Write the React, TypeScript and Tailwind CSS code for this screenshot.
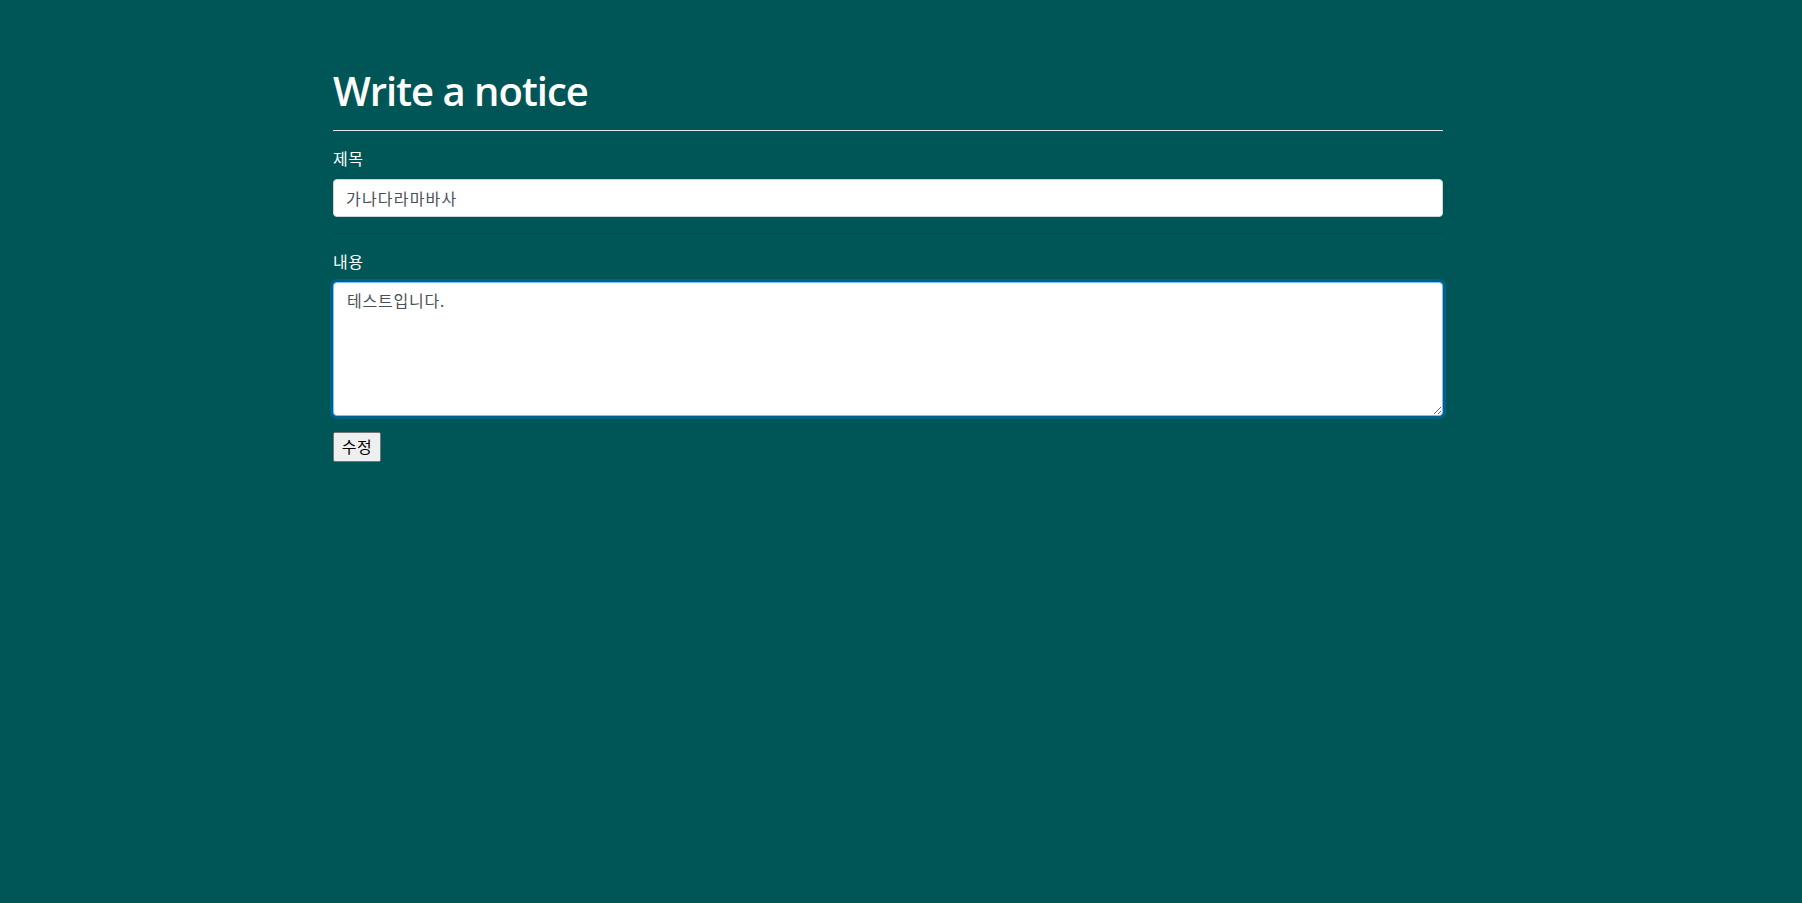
import React from "react";

export default function App() {
  const kr = { fontFamily: '"Noto Sans", "Noto Sans CJK KR", sans-serif' };
  return (
    <div className="min-h-[903px] w-full bg-[#005656]" style={kr}>
      <div className="ml-[333px] w-[1110px] pt-[67px]">
        <h1 className="m-0 text-[40px] font-semibold leading-[48px] text-white" style={{ fontFamily: '"Open Sans", "Noto Sans", sans-serif', letterSpacing: "-1px" }}>
          Write a notice
        </h1>
        <div className="mt-[15px] h-px w-full bg-[#e6e6e6]" />
        <form className="mt-[16px]" onSubmit={(e) => e.preventDefault()}>
          <label className="block text-[16px] leading-[24px] text-white mb-[8px] tracking-[0.6px]">제목</label>
          <input
            readOnly
            value="가나다라마바사"
            className="block h-[38px] w-full rounded-[4px] border border-[#ced4da] bg-white px-[12px] text-[16px] leading-[24px] text-[#495057] outline-none tracking-[1.2px]"
          />
          <div className="my-[16px] h-px w-full bg-[rgba(0,0,0,0.12)]" />
          <label className="block text-[16px] leading-[24px] text-white mb-[8px] tracking-[0.6px]">내용</label>
          <textarea
            readOnly
            value="테스트입니다."
            className="block h-[134px] w-full rounded-[4px] border border-[#80bdff] bg-white px-[13px] py-[6px] text-[16px] leading-[24px] text-[#495057] outline-none shadow-[0_0_0_3px_rgba(0,123,255,0.3)] tracking-[0.8px]"
          />
          <button
            type="submit"
            className="mt-[16px] block h-[30px] w-[48px] rounded-[2px] border border-[#767676] bg-[#efefef] p-0 text-[16px] leading-[24px] text-black tracking-[0.5px]"
          >
            수정
          </button>
        </form>
      </div>
    </div>
  );
}
